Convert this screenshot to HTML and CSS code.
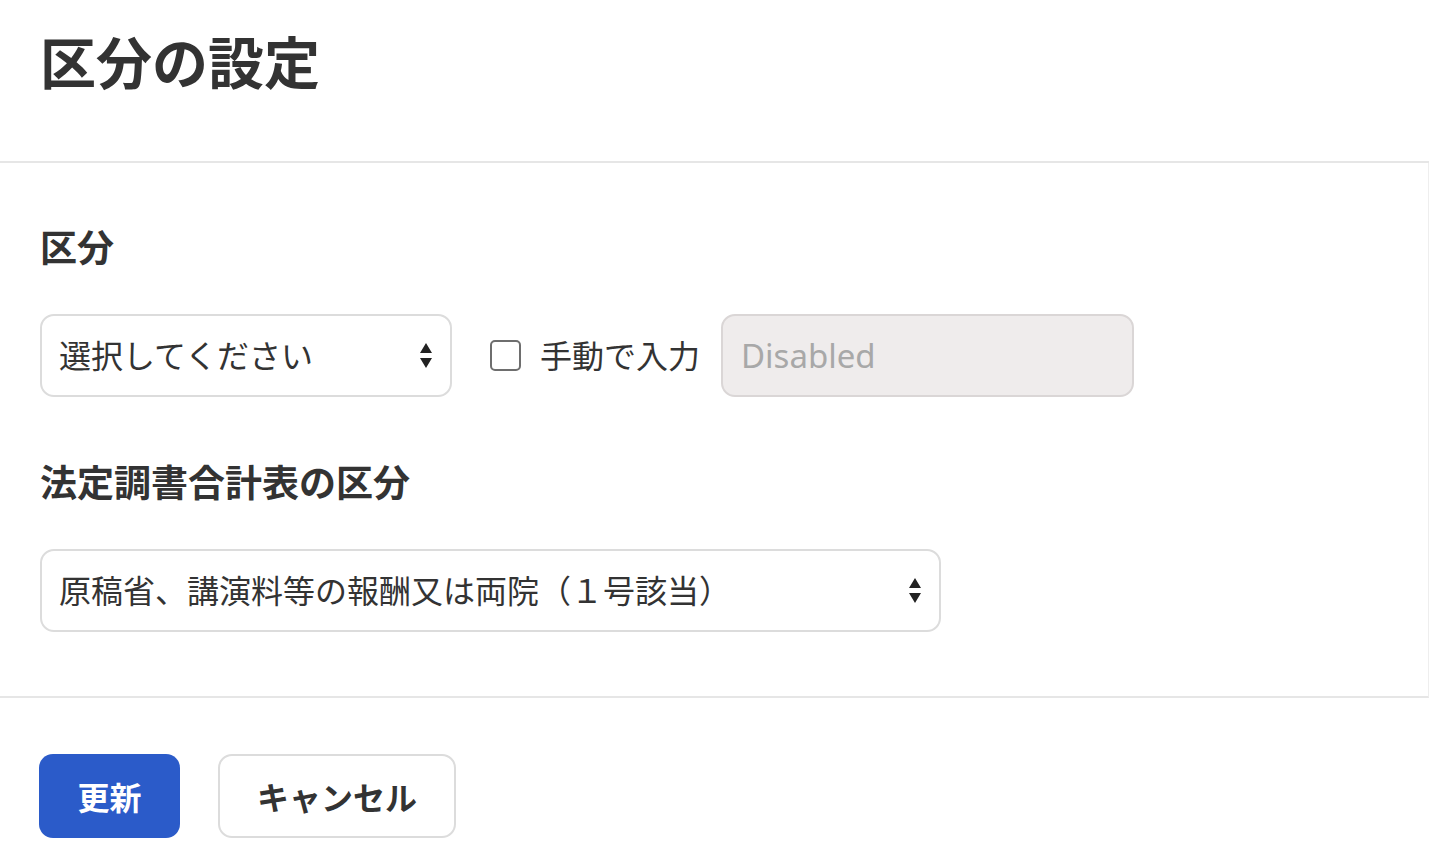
FILE: index.html
```html
<!DOCTYPE html>
<html lang="ja">
<head>
<meta charset="utf-8">
<title>区分の設定</title>
<link rel="stylesheet" href="styles.css">
</head>
<body>
<div class="modal">
  <header class="modal-header">
    <h1 class="modal-title">区分の設定</h1>
  </header>
  <section class="modal-body">
    <h2 class="field-label">区分</h2>
    <div class="field-row">
      <div class="select select-short">
        <span class="select-text">選択してください</span>
        <svg class="select-arrows" width="12" height="26" viewBox="0 0 12 26"><path d="M6 0 L12 10 L0 10 Z M0 15 L12 15 L6 25 Z" fill="#222"/></svg>
      </div>
      <label class="check">
        <span class="check-box"></span>
        <span class="check-label">手動で入力</span>
      </label>
      <div class="text-input disabled"><span class="placeholder">Disabled</span></div>
    </div>
    <h2 class="field-label">法定調書合計表の区分</h2>
    <div class="field-row">
      <div class="select select-long">
        <span class="select-text">原稿省、講演料等の報酬又は両院（１号該当）</span>
        <svg class="select-arrows" width="12" height="26" viewBox="0 0 12 26"><path d="M6 0 L12 10 L0 10 Z M0 15 L12 15 L6 25 Z" fill="#222"/></svg>
      </div>
    </div>
  </section>
  <footer class="modal-footer">
    <button class="btn btn-primary">更新</button>
    <button class="btn btn-secondary">キャンセル</button>
  </footer>
</div>
</body>
</html>
```
FILE: styles.css
```css
* { box-sizing: border-box; }
html, body {
  margin: 0;
  padding: 0;
  background: #fff;
  font-family: "Noto Sans CJK JP", "Noto Sans", sans-serif;
  color: #333;
}
.modal { width: 1429px; }
.modal-header {
  height: 163px;
  padding: 25px 40px 0;
  border-bottom: 2px solid #e6e6e6;
}
.modal-title {
  margin: 0;
  font-size: 56px;
  line-height: 70px;
  font-weight: 700;
  color: #333;
}
.modal-body {
  padding: 56px 40px 64px;
  border-right: 1px solid #eeeeee;
  border-bottom: 2px solid #e6e6e6;
}
.field-label {
  margin: 0 0 41px;
  font-size: 37px;
  line-height: 54px;
  font-weight: 700;
  color: #333;
}
.field-row {
  display: flex;
  align-items: center;
}
.field-row + .field-label { margin-top: 57px; }
.select {
  height: 83px;
  border: 2px solid #dcdcdc;
  border-radius: 14px;
  display: flex;
  align-items: center;
  justify-content: space-between;
  padding: 0 18px 0 17px;
  background: #fff;
}
.select-short { width: 412px; }
.select-long { width: 901px; }
.select-text {
  font-size: 32px;
  line-height: 44px;
  padding-bottom: 4px;
  font-weight: 400;
  color: #333;
  white-space: nowrap;
}
.select-arrows { display: block; }
.check {
  display: flex;
  align-items: center;
  margin-left: 38px;
}
.check-box {
  width: 31px;
  height: 31px;
  border: 2px solid #6e6e6e;
  border-radius: 5px;
  background: #fff;
}
.check-label {
  margin-left: 19px;
  font-size: 32px;
  line-height: 44px;
  padding-bottom: 3px;
  color: #333;
}
.text-input {
  width: 413px;
  height: 83px;
  margin-left: 21px;
  border: 2px solid #dad6d6;
  border-radius: 14px;
  display: flex;
  align-items: center;
  padding: 0 18px;
}
.text-input.disabled { background: #efecec; }
.placeholder {
  font-family: "Noto Sans", sans-serif;
  font-size: 33px;
  color: #a8a8a8;
}
.modal-footer {
  display: flex;
  gap: 38px;
  padding: 56px 39px 0;
}
.btn {
  height: 84px;
  border-radius: 14px;
  font-family: "Noto Sans CJK JP", "Noto Sans", sans-serif;
  font-size: 32px;
  font-weight: 700;
  cursor: pointer;
}
.btn-primary {
  width: 141px;
  background: #2b5bc9;
  border: none;
  color: #fff;
}
.btn-secondary {
  width: 238px;
  background: #fff;
  border: 2px solid #dcdcdc;
  color: #333;
}
```
